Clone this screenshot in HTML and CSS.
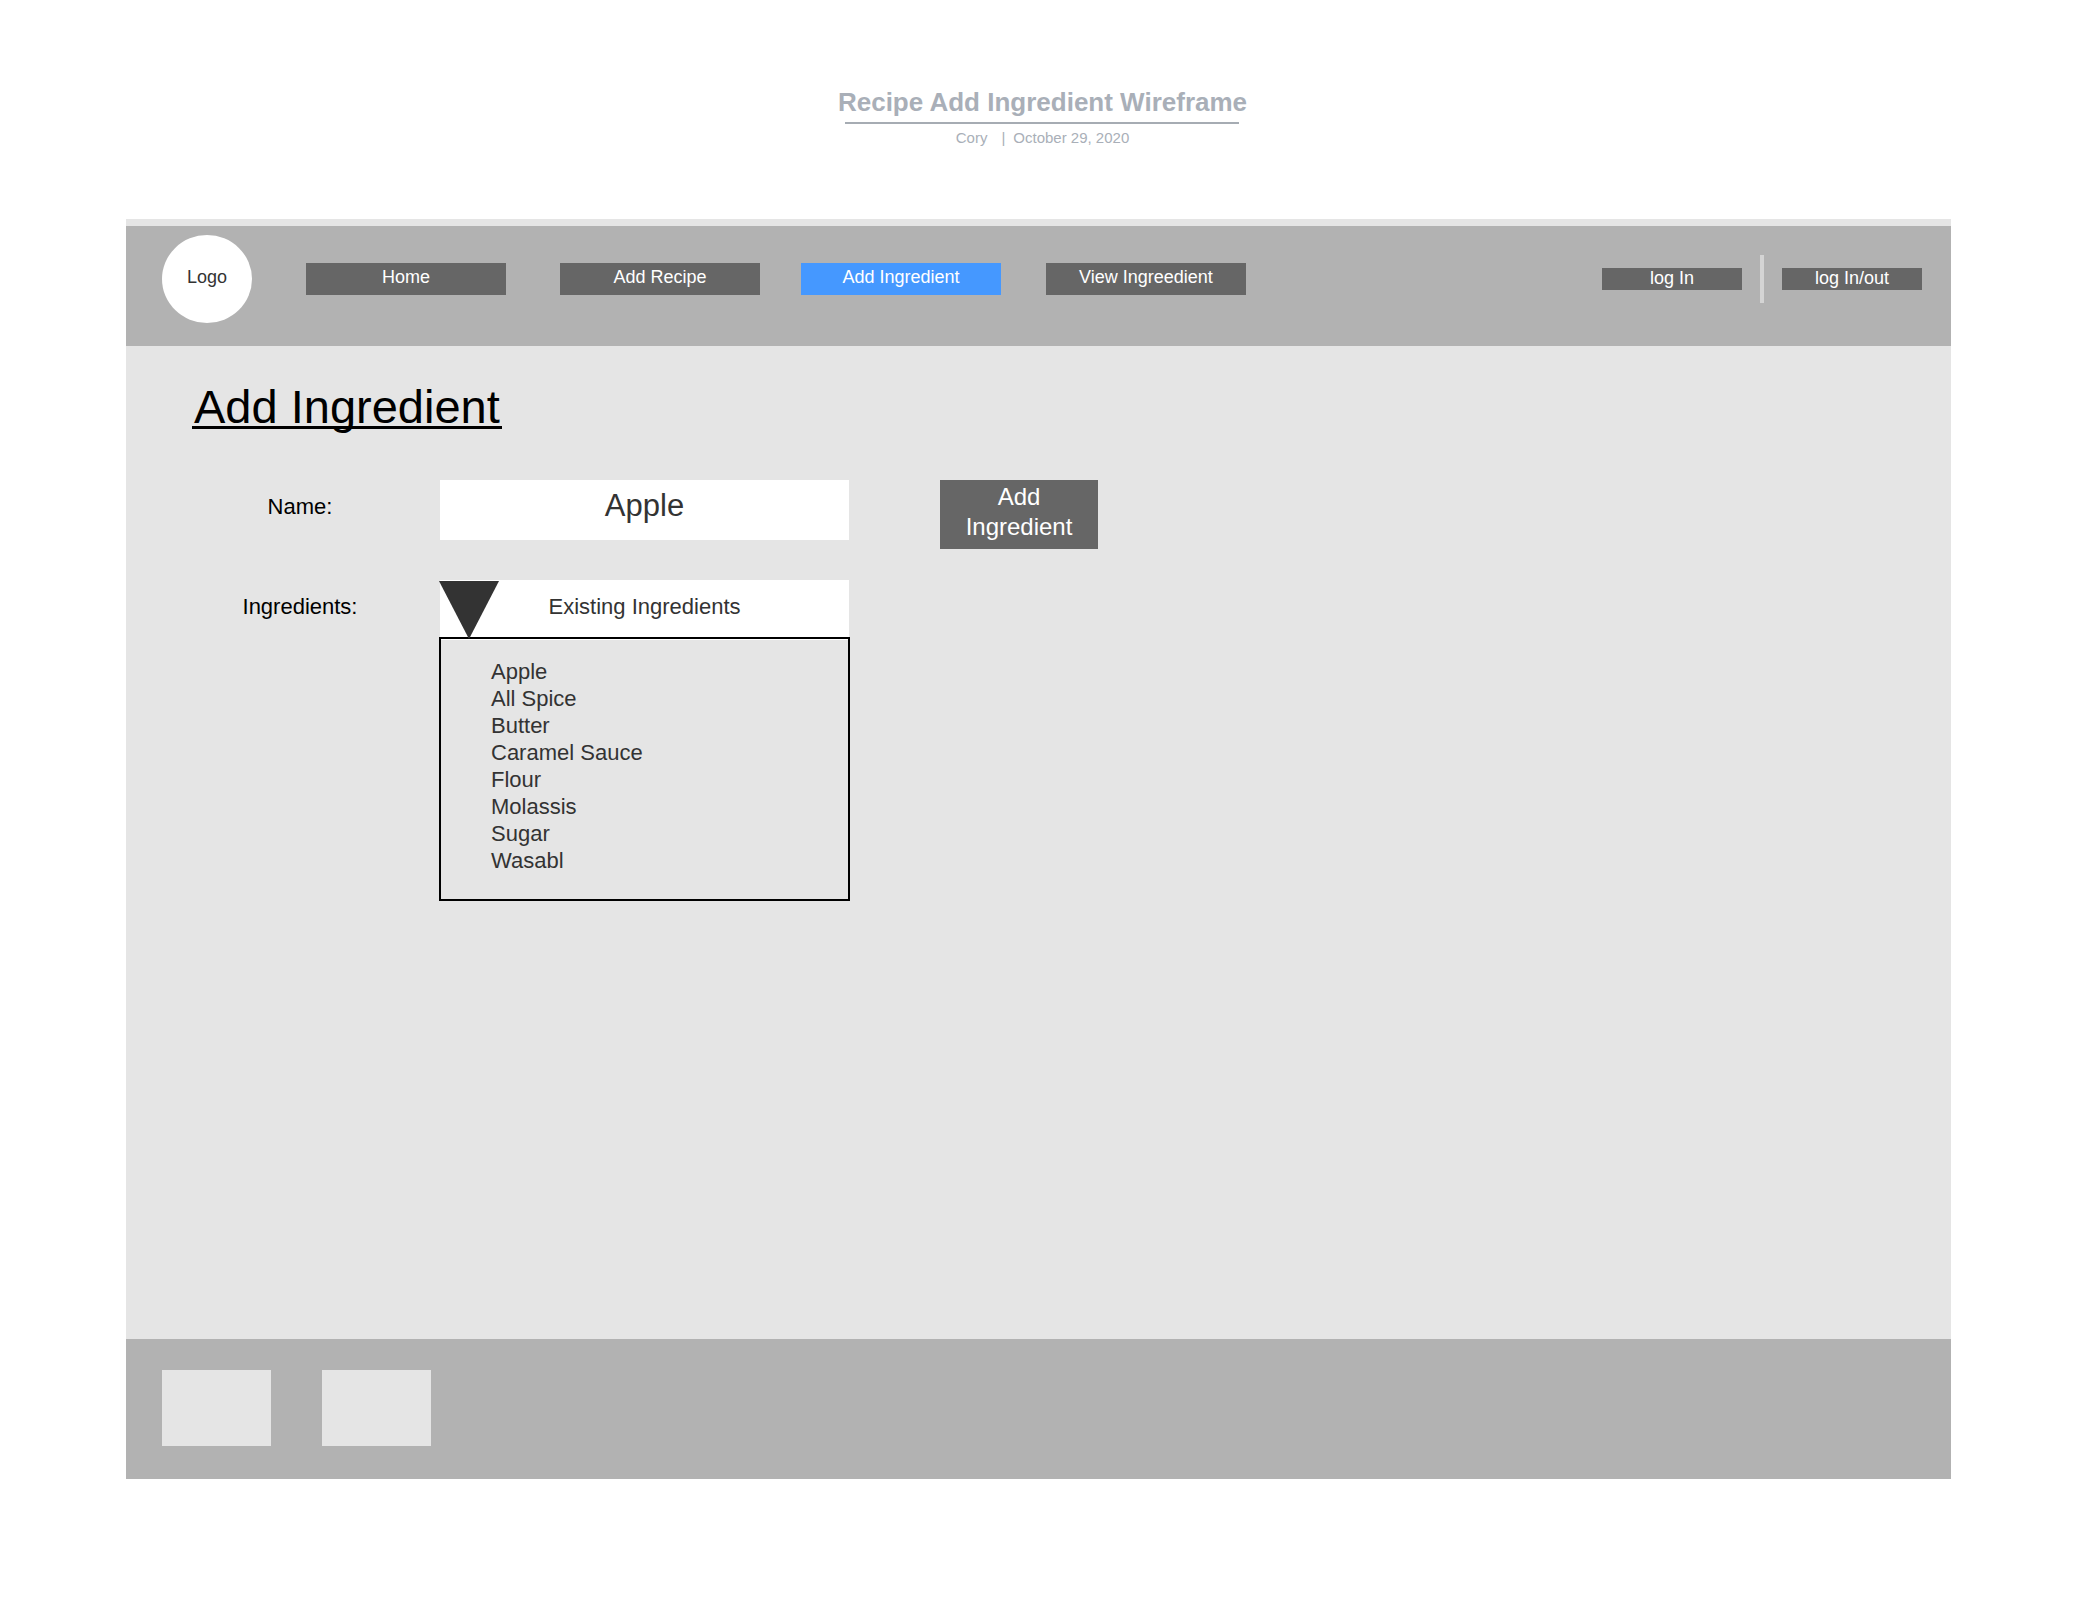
FILE: index.html
```html
<!DOCTYPE html>
<html lang="en">
<head>
<meta charset="utf-8">
<meta name="viewport" content="width=device-width, initial-scale=1">
<title>Recipe Add Ingredient Wireframe</title>
<link rel="stylesheet" href="styles.css">
</head>
<body>
<div class="doc-header">
  <p class="doc-title">Recipe Add Ingredient Wireframe</p>
  <p class="doc-meta"><span class="doc-author">Cory</span><span class="doc-bar">|</span><span>October 29, 2020</span></p>
</div>
<div class="frame">
  <header class="topbar">
    <a class="logo" href="#">Logo</a>
    <nav class="nav">
      <a class="nav-link" href="#">Home</a>
      <a class="nav-link" href="#">Add Recipe</a>
      <a class="nav-link nav-link-active" href="#" aria-current="page">Add Ingredient</a>
      <a class="nav-link" href="#">View Ingreedient</a>
    </nav>
    <div class="account">
      <button class="account-button" type="button">log In</button>
      <span class="account-divider"></span>
      <button class="account-button" type="button">log In/out</button>
    </div>
  </header>
  <main class="content">
    <h1 class="heading">Add Ingredient</h1>
    <form class="form">
      <label class="label" for="name">Name:</label>
      <input class="name-input" id="name" type="text" value="Apple">
      <button class="submit" type="button">Add Ingredient</button>
      <label class="label" for="existing">Ingredients:</label>
      <div class="dropdown">
        <select class="dropdown-select" id="existing">
          <option>Existing Ingredients</option>
        </select>
        <svg class="dropdown-arrow" viewBox="0 0 60 58" aria-hidden="true"><path d="M0 0H60L30 58Z" fill="#333333"/></svg>
        <ul class="dropdown-list">
          <li>Apple</li>
          <li>All Spice</li>
          <li>Butter</li>
          <li>Caramel Sauce</li>
          <li>Flour</li>
          <li>Molassis</li>
          <li>Sugar</li>
          <li>Wasabl</li>
        </ul>
      </div>
    </form>
  </main>
  <footer class="footer">
    <div class="footer-box"></div>
    <div class="footer-box"></div>
  </footer>
</div>
</body>
</html>
```
FILE: styles.css
```css
* {
  box-sizing: border-box;
}

body {
  display: flex;
  flex-direction: column;
  min-height: 100vh;
  margin: 0;
  padding: 87px 129px 121px 126px;
  background: #ffffff;
  color: #333333;
  font-family: "Liberation Sans", Arial, sans-serif;
  font-size: 22px;
}

button,
input,
select {
  margin: 0;
  border: 0;
  border-radius: 0;
  font-family: inherit;
}

/* Document title */
.doc-header {
  display: flex;
  flex-direction: column;
  align-items: center;
  padding: 0 0 72px 8px;
  color: #a9afb8;
}

.doc-title {
  margin: 0;
  font-size: 26px;
  font-weight: bold;
  line-height: 30px;
}

.doc-title::after {
  content: "";
  display: block;
  width: 394px;
  height: 2px;
  margin: 5px auto;
  background: #a6acb3;
}

.doc-meta {
  display: flex;
  margin: 0;
  font-size: 15px;
  line-height: 18px;
}

.doc-bar {
  margin: 0 8px 0 14px;
}

/* Wireframe */
.frame {
  display: flex;
  flex: 1;
  flex-direction: column;
  padding-top: 7px;
  background: #e5e5e5;
}

.topbar {
  display: flex;
  align-items: center;
  padding: 9px 29px 23px 36px;
  background: #b2b2b2;
  font-size: 18px;
}

.logo {
  width: 90px;
  height: 88px;
  padding-top: 31px;
  border-radius: 50%;
  background: #ffffff;
  color: #333333;
  line-height: 22px;
  text-align: center;
  text-decoration: none;
}

.nav {
  display: grid;
  grid-template-columns: 254px 241px 245px 200px;
  margin-left: 54px;
}

.nav-link {
  width: 200px;
  padding: 3px 0 7px;
  background: #666666;
  color: #ffffff;
  line-height: 22px;
  text-align: center;
  text-decoration: none;
}

.nav-link-active {
  background: #4598ff;
}

.account {
  display: flex;
  align-items: center;
  gap: 18px;
  margin-left: auto;
}

.account-button {
  width: 140px;
  padding: 0 0 2px;
  background: #666666;
  color: #ffffff;
  font-size: 18px;
  line-height: 20px;
}

.account-divider {
  width: 4px;
  height: 48px;
  background: #d4d4d4;
}

.content {
  flex: 1;
  padding: 33px 66px;
}

.heading {
  width: fit-content;
  margin: 0 0 45px;
  padding: 0 2px;
  background: linear-gradient(#000000, #000000) 0 47px / 100% 3px no-repeat;
  color: #000000;
  font-size: 47px;
  font-weight: normal;
  line-height: 56px;
}

.form {
  display: grid;
  grid-template-columns: 216px 409px 217px;
  align-items: start;
  gap: 40px 32px;
}

.label {
  padding: 14px 0 12px;
  color: #000000;
  line-height: 26px;
  text-align: center;
}

.name-input {
  width: 100%;
  height: 60px;
  padding: 0 0 8px;
  background: #ffffff;
  color: #333333;
  font-size: 31px;
  text-align: center;
}

.submit {
  grid-column: 3;
  grid-row: 1 / span 2;
  justify-self: end;
  width: 158px;
  padding: 2px 16px 7px;
  background: #666666;
  color: #ffffff;
  font-size: 24px;
  line-height: 30px;
}

/* Open drop-down */
.dropdown {
  position: relative;
}

.dropdown-select {
  display: block;
  width: 100%;
  height: 57px;
  padding: 0 0 4px;
  appearance: none;
  background: #ffffff;
  color: #333333;
  font-size: 22px;
  text-align: center;
  text-align-last: center;
}

.dropdown-arrow {
  position: absolute;
  top: 1px;
  left: -1px;
  width: 60px;
  height: 58px;
}

.dropdown-list {
  margin: 0 -1px;
  padding: 19px 0 25px 50px;
  border: 2px solid #000000;
  box-shadow: inset 0 1px #ffffff;
  line-height: 27px;
  list-style: none;
}

.footer {
  display: flex;
  gap: 51px;
  padding: 31px 36px 33px;
  background: #b2b2b2;
}

.footer-box {
  width: 109px;
  height: 76px;
  background: #e5e5e5;
}
```
